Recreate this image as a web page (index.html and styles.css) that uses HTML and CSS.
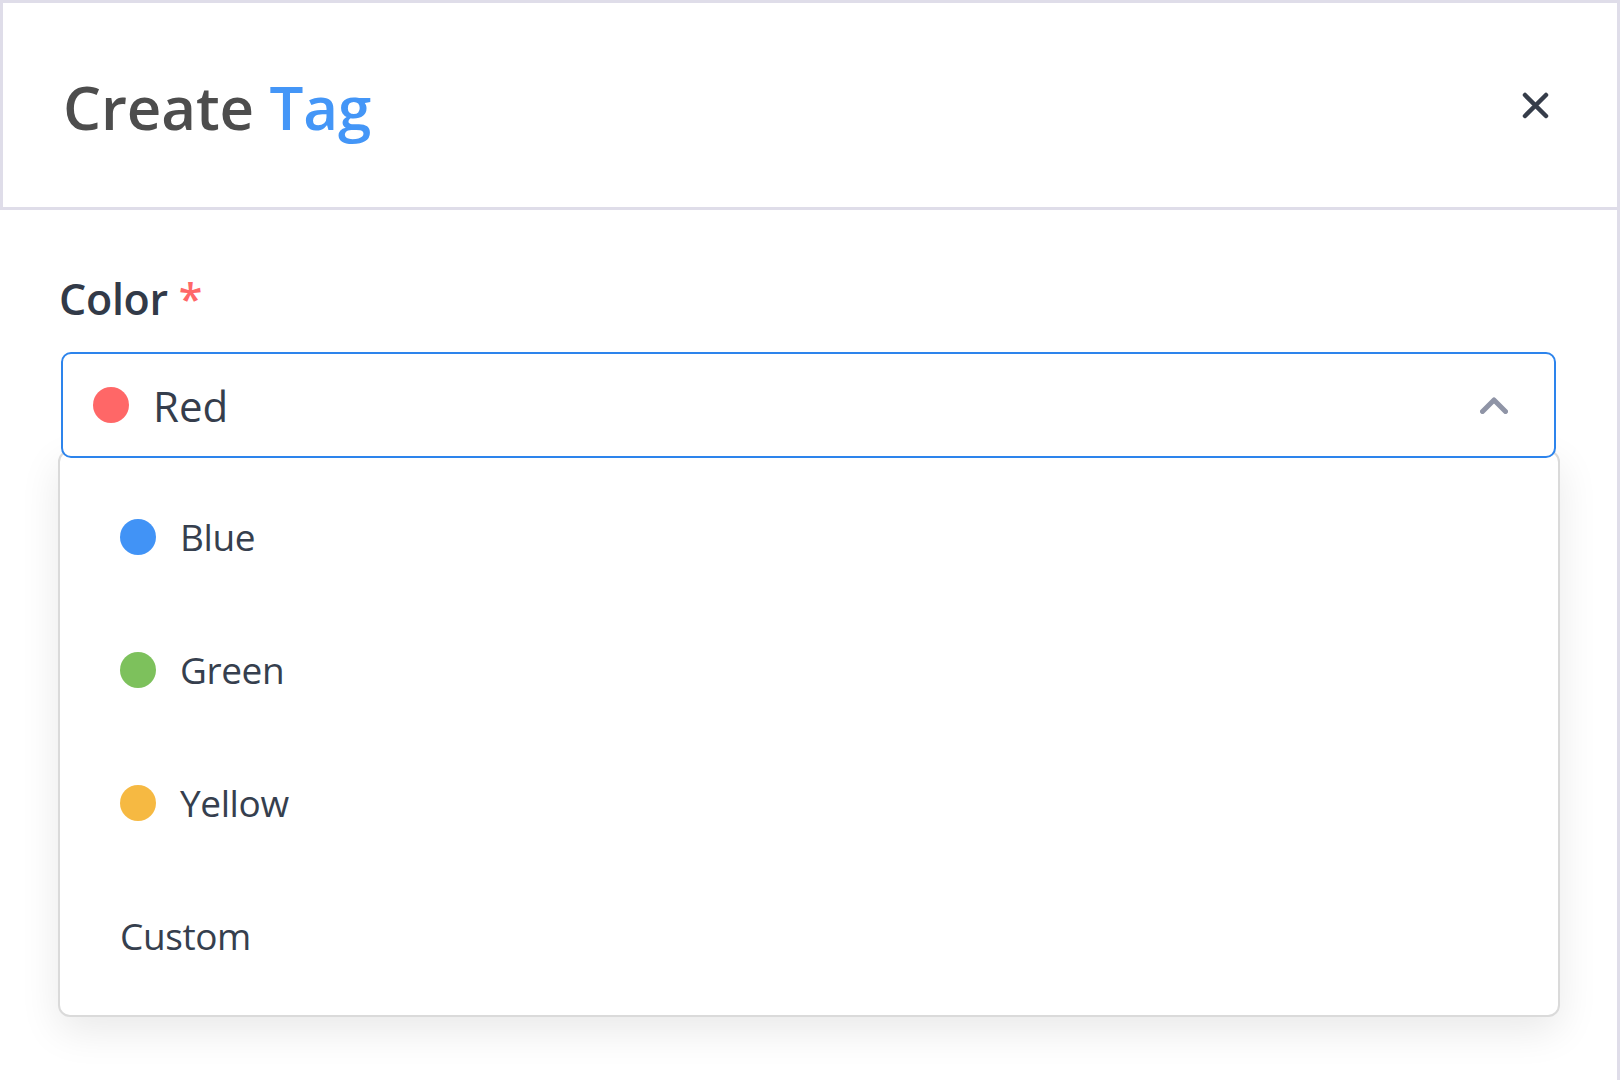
FILE: index.html
```html
<!DOCTYPE html>
<html lang="en">
<head>
  <meta charset="UTF-8" />
  <title>Create Tag</title>
  <link rel="stylesheet" href="styles.css">
</head>
<body>

  <div class="modal">
    <!-- Header -->
    <header class="modal-header">
      <h1>Create <span class="accent">Tag</span></h1>
      <button class="close" aria-label="Close">
        <svg width="27" height="27" viewBox="0 0 27 27">
          <path d="M3 3 L24 24 M24 3 L3 24" stroke="#363d4a" stroke-width="4.5" stroke-linecap="round" fill="none"/>
        </svg>
      </button>
    </header>

    <!-- Body -->
    <section class="modal-body">
      <label class="field-label">Color <span class="required">*</span></label>

      <div class="select">
        <div class="select-box">
          <span class="dot dot-red"></span>
          <span class="select-value">Red</span>
          <svg class="chevron" width="28" height="18" viewBox="0 0 28 18">
            <path d="M2.5 15.5 L14 4 L25.5 15.5" stroke="#8f94a6" stroke-width="5" stroke-linecap="round" stroke-linejoin="round" fill="none"/>
          </svg>
        </div>

        <ul class="menu">
          <li class="option"><span class="dot dot-blue"></span>Blue</li>
          <li class="option"><span class="dot dot-green"></span>Green</li>
          <li class="option"><span class="dot dot-yellow"></span>Yellow</li>
          <li class="option">Custom</li>
        </ul>
      </div>
    </section>
  </div>

</body>
</html>
```

FILE: styles.css
```css
body {
  margin: 0;
  background-color: #ffffff;
  font-family: 'Open Sans', 'Noto Sans', sans-serif;
  color: #343c4b;
}
.modal {
  width: 1620px;
  height: 1080px;
  box-sizing: border-box;
  border-right: 3px solid #dfdde9;
  overflow: hidden;
}

/* Header */
.modal-header {
  height: 210px;
  box-sizing: border-box;
  border: 3px solid #dfdde9;
  border-right: none;
  display: flex;
  align-items: center;
  justify-content: space-between;
  padding: 0 68px 0 60px;
}
.modal-header h1 {
  margin: 4px 0 0;
  font-size: 60px;
  font-weight: 600;
  color: #4d4d4d;
  letter-spacing: -0.1px;
}
.accent {
  color: #4496f7;
}
.close {
  background: none;
  border: none;
  padding: 0;
  display: flex;
  cursor: pointer;
}

/* Body */
.modal-body {
  padding: 59px 61px 0 61px;
}
.field-label {
  display: block;
  margin-left: -2px;
  font-size: 43px;
  font-weight: 600;
  line-height: 60px;
  letter-spacing: -0.3px;
  color: #323a48;
  margin-bottom: 23px;
}
.required {
  color: #ff6868;
}

/* Select */
.select {
  width: 1495px;
}
.select-box {
  position: relative;
  z-index: 2;
  height: 106px;
  box-sizing: border-box;
  border: 2px solid #2d84ec;
  border-radius: 10px;
  background: #ffffff;
  display: flex;
  align-items: center;
  padding: 0 46px 0 30px;
}
.select-value {
  flex: 1;
  font-size: 42px;
  color: #353d4c;
  margin-left: 24px;
}
.dot {
  width: 36px;
  height: 36px;
  border-radius: 50%;
  flex-shrink: 0;
}
.dot-red { background-color: #ff6767; }
.dot-blue { background-color: #4193f6; }
.dot-green { background-color: #7dc15c; }
.dot-yellow { background-color: #f6b942; }

/* Menu */
.menu {
  list-style: none;
  margin: -8px -4px 0 -3px;
  padding: 18px 0 13px;
  border: 2px solid #dadada;
  border-radius: 12px;
  background: #ffffff;
  box-shadow: 0 14px 40px rgba(0, 0, 0, 0.09);
}
.option {
  height: 133px;
  display: flex;
  align-items: center;
  gap: 24px;
  padding-left: 60px;
  font-size: 37px;
  letter-spacing: -0.4px;
  color: #363f4e;
}
```
